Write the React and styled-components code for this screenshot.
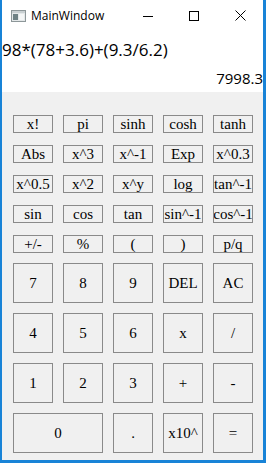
import React from 'react';
import styled, { createGlobalStyle } from 'styled-components';

const GlobalStyle = createGlobalStyle`
    html, body {
        margin: 0;
        padding: 0;
        background: #ffffff;
    }
`;

const Window = styled.div`
    width: 266px;
    height: 463px;
    box-sizing: border-box;
    border-left: 2px solid #1883d7;
    border-right: 3px solid #1883d7;
    border-bottom: 3px solid #1883d7;
    display: flex;
    flex-direction: column;
    background: #ffffff;
    overflow: hidden;
`;

const TitleBar = styled.div`
    height: 31px;
    display: flex;
    align-items: center;
    flex-shrink: 0;
`;

const AppIcon = styled.div`
    width: 16px;
    height: 16px;
    margin-left: 8px;
    margin-right: 5px;
    display: flex;
    align-items: center;
    justify-content: center;
`;

const Title = styled.div`
    flex: 1;
    font-family: "Open Sans", "Noto Sans", sans-serif;
    font-size: 12px;
    color: #000000;
    margin-top: -1px;
`;

const CaptionButton = styled.div`
    width: 46px;
    height: 31px;
    display: flex;
    align-items: center;
    justify-content: center;
`;

const Display = styled.div`
    height: 61px;
    padding-top: 9px;
    box-sizing: border-box;
    display: flex;
    flex-direction: column;
    font-family: "Open Sans", "Noto Sans", sans-serif;
    color: #000000;
`;

const Expression = styled.div`
    font-size: 17px;
    line-height: 20px;
    white-space: nowrap;
`;

const Result = styled.div`
    font-size: 15px;
    line-height: 18px;
    margin-top: 9px;
    text-align: right;
`;

const Keypad = styled.div`
    flex: 1;
    background: #f0f0f0;
    padding: 23px 10px 0 11px;
    display: flex;
    flex-direction: column;
    gap: 10px;
`;

const Grid = styled.div`
    display: grid;
    grid-template-columns: repeat(5, 40px);
    grid-auto-rows: ${p => p.$rowHeight}px;
    column-gap: 10px;
    row-gap: ${p => p.$rowGap}px;
`;

const Key = styled.button`
    box-sizing: border-box;
    margin: 0;
    padding: 0;
    border: 1px solid #8a8a8a;
    background: #f0f0f0;
    color: #000000;
    font-family: "Liberation Serif", "Times New Roman", serif;
    font-size: 15px;
    line-height: 1;
    white-space: nowrap;
    overflow: hidden;
    display: flex;
    align-items: center;
    justify-content: center;
    grid-column: span ${p => p.$span || 1};
`;

const smallKeys = [
    'x!', 'pi', 'sinh', 'cosh', 'tanh',
    'Abs', 'x^3', 'x^-1', 'Exp', 'x^0.3',
    'x^0.5', 'x^2', 'x^y', 'log', 'tan^-1',
    'sin', 'cos', 'tan', 'sin^-1', 'cos^-1',
    '+/-', '%', '(', ')', 'p/q',
];

const bigKeys = [
    { label: '7' }, { label: '8' }, { label: '9' }, { label: 'DEL' }, { label: 'AC' },
    { label: '4' }, { label: '5' }, { label: '6' }, { label: 'x' }, { label: '/' },
    { label: '1' }, { label: '2' }, { label: '3' }, { label: '+' }, { label: '-' },
    { label: '0', span: 2 }, { label: '.' }, { label: 'x10^' }, { label: '=' },
];

const App = () => (
    <>
        <GlobalStyle />
        <Window>
            <TitleBar>
                <AppIcon>
                    <svg width="15" height="12" viewBox="0 0 15 12">
                        <rect x="0.5" y="0.5" width="14" height="11" fill="#e4e8e9" stroke="#8d9799" />
                        <rect x="1" y="1" width="13" height="2" fill="#c9d0d2" />
                        <rect x="2" y="4" width="5" height="6" fill="#6f8285" />
                        <rect x="8" y="4" width="5" height="6" fill="#f4f6f6" />
                    </svg>
                </AppIcon>
                <Title>MainWindow</Title>
                <CaptionButton>
                    <svg width="10" height="10" viewBox="0 0 10 10">
                        <line x1="0" y1="5.5" x2="10" y2="5.5" stroke="#000" strokeWidth="1" />
                    </svg>
                </CaptionButton>
                <CaptionButton>
                    <svg width="10" height="10" viewBox="0 0 10 10">
                        <rect x="0.5" y="0.5" width="9" height="9" fill="none" stroke="#000" strokeWidth="1" />
                    </svg>
                </CaptionButton>
                <CaptionButton>
                    <svg width="11" height="11" viewBox="0 0 11 11">
                        <path d="M0.5 0.5 L10.5 10.5 M10.5 0.5 L0.5 10.5" stroke="#000" strokeWidth="1" />
                    </svg>
                </CaptionButton>
            </TitleBar>
            <Display>
                <Expression>98*(78+3.6)+(9.3/6.2)</Expression>
                <Result>7998.3</Result>
            </Display>
            <Keypad>
                <Grid $rowHeight={18} $rowGap={12}>
                    {smallKeys.map(k => <Key key={k}>{k}</Key>)}
                </Grid>
                <Grid $rowHeight={40} $rowGap={10}>
                    {bigKeys.map(k => <Key key={k.label} $span={k.span}>{k.label}</Key>)}
                </Grid>
            </Keypad>
        </Window>
    </>
);

export default App;
